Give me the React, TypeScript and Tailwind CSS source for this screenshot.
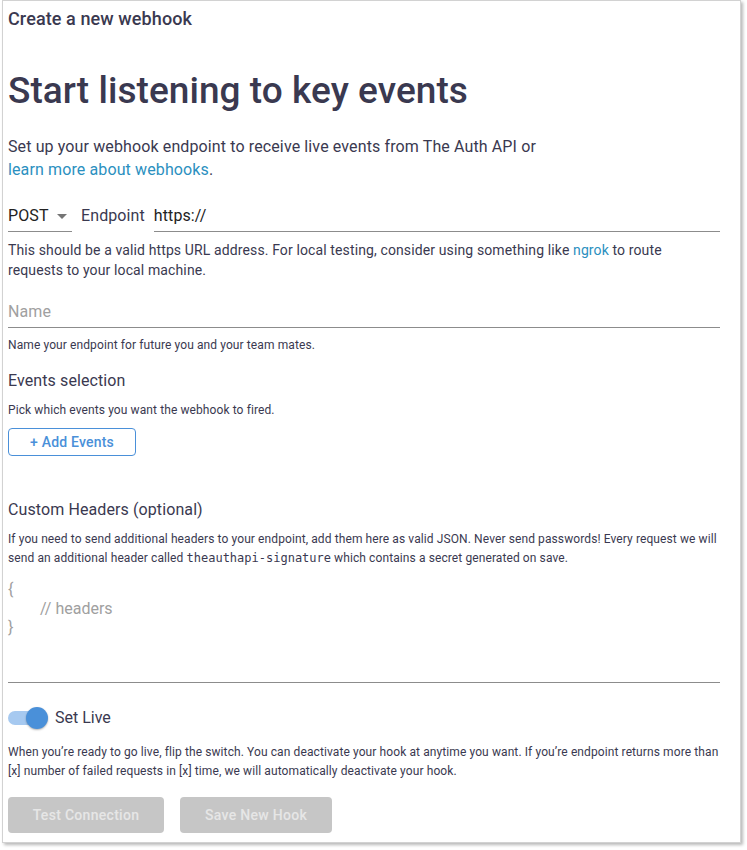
import React from 'react';

const ink = 'text-[#3a3950]';

const App: React.FC = () => {
  return (
    <div className="min-h-screen bg-white pt-0 font-['Roboto','Liberation_Sans',sans-serif]">
      <div className="ml-[2px] w-[739px] h-[843px] bg-white border border-[#d2d2d2] shadow-[2px_2px_3px_rgba(0,0,0,0.28)] pl-[5px] pr-[20px] pt-[6px] pb-[10px]">
        <h1 className={`text-[18px] leading-[24px] font-medium tracking-[0.1px] ${ink}`}>Create a new webhook</h1>

        <h2 className={`mt-[38px] text-[37px] leading-[44px] font-medium tracking-[0.05px] ${ink}`}>
          Start listening to key events
        </h2>

        <p className={`mt-[22px] text-[16px] leading-[23px] tracking-[0.12px] ${ink}`}>
          Set up your webhook endpoint to receive live events from The Auth API or
          <br />
          <a className="text-[#2b90c0]">learn more about webhooks</a>.
        </p>

        {/* endpoint row */}
        <div className="mt-[19px] flex items-end h-[32px] tracking-[0.1px]">
          <div className="w-[64px] h-full flex items-center justify-between border-b border-[#8c8c8c] pr-[5px]">
            <span className="text-[16px] text-[#222]">POST</span>
            <svg width="10" height="5" viewBox="0 0 10 5" className="mt-[1px]">
              <path d="M0 0h10L5 5z" fill="#757575" />
            </svg>
          </div>
          <span className="ml-[9px] h-full flex items-center text-[16px] text-[#3a3950]">Endpoint</span>
          <div className="ml-[9px] flex-1 h-full flex items-center border-b border-[#8c8c8c] text-[16px] text-[#222]">
            https://
          </div>
        </div>
        <p className={`mt-[8px] text-[14px] leading-[20px] tracking-[0.12px] ${ink}`}>
          This should be a valid https URL address. For local testing, consider using something like{' '}
          <a className="text-[#2b90c0]">ngrok</a> to route
          <br />
          requests to your local machine.
        </p>

        {/* name */}
        <div className="mt-[16px] h-[32px] flex items-center border-b border-[#8c8c8c] text-[16px] text-[#a0a0a0] tracking-[0.1px]">
          Name
        </div>
        <p className={`mt-[8px] text-[12px] leading-[18px] tracking-[0.1px] ${ink}`}>Name your endpoint for future you and your team mates.</p>

        {/* events */}
        <h3 className={`mt-[15px] text-[16px] leading-[24px] tracking-[0.1px] ${ink}`}>Events selection</h3>
        <p className={`mt-[8px] text-[12px] leading-[18px] tracking-[0.1px] ${ink}`}>Pick which events you want the webhook to fired.</p>
        <button className="mt-[9px] h-[28px] w-[128px] rounded-[4px] border border-[#4a90d9] text-[#4a90d9] text-[14px] font-medium tracking-[0.2px]">
          + Add Events
        </button>

        {/* custom headers */}
        <h3 className={`mt-[42px] text-[16px] leading-[24px] tracking-[0.1px] ${ink}`}>Custom Headers (optional)</h3>
        <p className={`mt-[8px] text-[12px] leading-[19px] tracking-[0.1px] ${ink}`}>
          If you need to send additional headers to your endpoint, add them here as valid JSON. Never send passwords! Every request we will
          <br />
          send an additional header called{' '}
          <code className="font-['DejaVu_Sans_Mono','Liberation_Mono',monospace] text-[12px] tracking-normal">theauthapi-signature</code> which
          contains a secret generated on save.
        </p>
        <div className="mt-[12px] h-[103px] border-b border-[#8c8c8c] text-[16px] leading-[19px] text-[#a0a0a0]">
          <div>{'{'}</div>
          <div className="pl-[32px]">// headers</div>
          <div>{'}'}</div>
        </div>

        {/* set live */}
        <div className="mt-[23px] h-[24px] flex items-center">
          <div className="relative w-[40px] h-[24px] flex items-center">
            <div className="w-[34px] h-[14px] rounded-full bg-[#a6c9f0]" />
            <div className="absolute left-[18px] top-[1px] w-[22px] h-[22px] rounded-full bg-[#4a90d9] shadow-[0_1px_2px_rgba(0,0,0,0.3)]" />
          </div>
          <span className={`ml-[7px] text-[16px] ${ink}`}>Set Live</span>
        </div>
        <p className={`mt-[13px] text-[12px] leading-[19px] tracking-[0.1px] ${ink}`}>
          When you’re ready to go live, flip the switch. You can deactivate your hook at anytime you want. If you’re endpoint returns more than
          <br />
          [x] number of failed requests in [x] time, we will automatically deactivate your hook.
        </p>

        <div className="mt-[16px] flex gap-[16px]">
          <button className="h-[36px] w-[156px] rounded-[4px] bg-[#c6c6c6] text-[#e6e6e6] text-[14px] font-medium tracking-[0.3px]">
            Test Connection
          </button>
          <button className="h-[36px] w-[152px] rounded-[4px] bg-[#c6c6c6] text-[#e6e6e6] text-[14px] font-medium tracking-[0.3px]">
            Save New Hook
          </button>
        </div>
      </div>
    </div>
  );
};

export default App;
